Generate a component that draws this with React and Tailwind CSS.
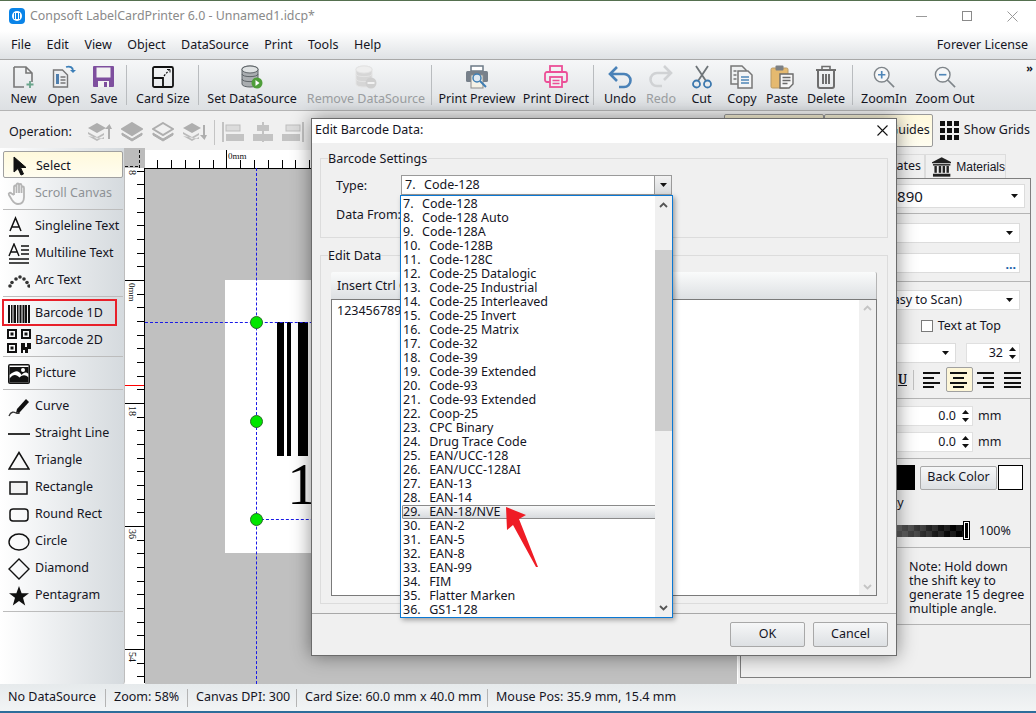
import React from "react";

const F = "font-['Noto_Sans','Open_Sans',sans-serif]";

const I = {
  New: () => (<svg width="22" height="24" viewBox="0 0 22 24" fill="none"><path d="M1 2h12l6 6v9M19 8h-6V2M1 2v20h10" stroke="#777" strokeWidth="1.6" /><path d="M17 16v7M13.5 19.500h7" stroke="#6aa58c" strokeWidth="1.8" /></svg>),
  Open: () => (<svg width="24" height="24" viewBox="0 0 24 24" fill="none"><path d="M1.500 5h9l5 5v12h-14z" fill="#eceef0" stroke="#777" strokeWidth="1.400" /><path d="M4 9h3v10H4z" fill="#4f7fae" /><path d="M8.500 12h5M8.500 15h5M8.500 18h5" stroke="#777" strokeWidth="1.300" /><path d="M14 2c4-1 7 0 7 4" stroke="#3c7fb8" strokeWidth="1.800" /><path d="M18 5l3 3 3-3" fill="#3c7fb8" /></svg>),
  Save: () => (<svg width="22" height="22" viewBox="0 0 22 22"><rect width="21" height="21" rx="1" fill="#7e4f9e" /><rect x="3.500" y="1.500" width="14" height="10" fill="#f2f2f2" /><rect x="5" y="15" width="11" height="6" fill="#f2f2f2" /><rect x="11" y="16" width="3" height="5" fill="#7e4f9e" /></svg>),
  Card: () => (<svg width="22" height="22" viewBox="0 0 22 22" fill="none" stroke="#111"><rect x="1" y="1" width="20" height="20" rx="1.500" strokeWidth="1.800" /><path d="M1 12h10v9" strokeWidth="1.800" /><path d="M12 10l5-6" strokeWidth="1.200" strokeDasharray="2 1.500" /><path d="M15 3.500h3v3" strokeWidth="1" /></svg>),
  Db: ({ off }) => (<svg width="22" height="24" viewBox="0 0 22 24"><g fill={off ? "#d6d6d6" : "#a9adb0"} stroke={off ? "#e4e4e4" : "#5e6468"}><path d="M1 4c0-4 16-4 16 0v15c0 4-16 4-16 0z" /><path d="M1 9c0 3.500 16 3.500 16 0M1 14c0 3.500 16 3.500 16 0" fill="none" /><ellipse cx="9" cy="4.500" rx="8" ry="3.500" fill={off ? "#eeeeee" : "#dfe2e3"} /></g><circle cx="16" cy="18" r="5.500" fill={off ? "#cfcfcf" : "#4f9e3a"} />{off ? <rect x="12.500" y="17" width="7" height="2" fill="#f2f2f2" /> : <path d="M14.500 15l4 3-4 3z" fill="#fff" />}</svg>),
  Preview: () => (<svg width="24" height="24" viewBox="0 0 24 24" fill="none"><rect x="6" y="1" width="12" height="5" fill="#fff" stroke="#6c7a86" strokeWidth="1.500" /><rect x="1" y="6" width="22" height="11" rx="1.500" fill="#77808a" /><rect x="6" y="10" width="12" height="13" fill="#f4f1e6" stroke="#8a8a8a" /><circle cx="12" cy="13" r="4" fill="#dfe9f2" stroke="#3f7eb3" strokeWidth="1.500" /><path d="M15 16l6 6" stroke="#3f7eb3" strokeWidth="2" /></svg>),
  Direct: () => (<svg width="24" height="24" viewBox="0 0 24 24" fill="none" stroke="#ec4f97" strokeWidth="1.800"><rect x="6" y="1" width="12" height="6" /><rect x="1" y="7" width="22" height="10" rx="2" /><rect x="6" y="12" width="12" height="10" fill="#f0f1f3" /><path d="M8.500 15.500h7M8.500 18.500h7" strokeWidth="1.400" /></svg>),
  Undo: ({ off }) => (<svg width="24" height="24" viewBox="0 0 24 24" fill="none" stroke={off ? "#d0d2d4" : "#4a82b8"} strokeWidth="2.600"><path d={off ? "M21 8H8a6.500 6.500 0 0 0 0 13h5M15 1l7 7-7 7" : "M3 9h13a6.500 6.500 0 0 1 0 13h-5M9 2L2 9l7 7"} /></svg>),
  Cut: () => (<svg width="22" height="24" viewBox="0 0 22 24" fill="none"><path d="M5 1l10 15M17 1L7 16" stroke="#6e7478" strokeWidth="1.800" /><circle cx="5.500" cy="19" r="3.500" stroke="#3c78ae" strokeWidth="1.800" /><circle cx="16.500" cy="19" r="3.500" stroke="#3c78ae" strokeWidth="1.800" /></svg>),
  Copy: () => (<svg width="24" height="24" viewBox="0 0 24 24" fill="none"><path d="M1 1h11l4 4v14H1z" fill="#eef0f1" stroke="#777" strokeWidth="1.500" /><path d="M8 6h10l4 4v13H8z" fill="#f4f5f6" stroke="#777" strokeWidth="1.500" /><path d="M3.500 6h3M3.500 10h3M3.500 14h3" stroke="#777" strokeWidth="1.500" /><path d="M11 12h8M11 15h8M11 18h8" stroke="#4f86b8" strokeWidth="1.500" /></svg>),
  Paste: () => (<svg width="24" height="24" viewBox="0 0 24 24"><rect x="1" y="3" width="17" height="20" rx="1.500" fill="#e5b96f" stroke="#b99a66" /><rect x="5.500" y="0.500" width="8" height="5" rx="1" fill="#7c8084" /><path d="M10 9h13v10l-4 4h-9z" fill="#f6f6f6" stroke="#6a6a6a" strokeWidth="1.400" /><path d="M12.500 12.500h8M12.500 15.500h8M12.500 18.500h5" stroke="#6a6a6a" strokeWidth="1.300" /></svg>),
  Trash: () => (<svg width="22" height="24" viewBox="0 0 22 24" fill="none" stroke="#6e6e6e"><path d="M1 5h20" strokeWidth="2" /><path d="M7 5V1.500h8V5" strokeWidth="1.600" /><path d="M3 5v16c0 1 1 2 2 2h12c1 0 2-1 2-2V5" strokeWidth="2" /><path d="M8 9v10M11 9v10M14 9v10" strokeWidth="2" /></svg>),
  Zoom: ({ plus }) => (<svg width="22" height="22" viewBox="0 0 24 24" fill="none"><circle cx="9.500" cy="9.500" r="8" stroke="#7e8489" strokeWidth="1.500" fill="#f6f7f8" /><path d="M15 15l8 8" stroke="#7e8489" strokeWidth="1.800" /><path d={plus ? "M5.500 9.500h8M9.500 5.500v8" : "M5.500 9.500h8"} stroke="#4f86b8" strokeWidth="1.800" /></svg>),
  Stack1: ({ down }) => (<svg width="24" height="20" viewBox="0 0 24 20" fill="#aeaeae"><path d="M0 6l9-5 9 5-9 5z" /><path d="M0 10l9 5 7-4v2l-7 4-9-5zM0 14l9 5 7-4v2" opacity=".8" /><path d={down ? "M20 3v10h-3l4.500 5L24 13h-2V3z" : "M20 17V7h-3l4.500-5L24 7h-2v10z"} /></svg>),
  Stack2: ({ hollow }) => (<svg width="22" height="20" viewBox="0 0 22 20"><path d="M11 1l10 6-10 6L1 7z" fill={hollow ? "none" : "#aeaeae"} stroke="#aeaeae" strokeWidth="2" /><path d="M1 11l10 6 10-6v2l-10 6-10-6z" fill="#aeaeae" stroke="#aeaeae" /></svg>),
  AlignBar: ({ v }) => (<svg width="22" height="20" viewBox="0 0 22 20" fill="#c3c3c3">{v === 0 && <><rect width="2" height="20" /><rect x="4" y="3" width="14" height="6" fill="#dcdcdc" stroke="#bdbdbd" /><rect x="4" y="12" width="18" height="7" /></>}{v === 1 && <><rect x="10" width="2" height="20" /><rect x="5" y="3" width="12" height="6" /><rect x="1" y="12" width="20" height="7" /></>}{v === 2 && <><rect x="20" width="2" height="20" /><rect x="4" y="3" width="14" height="6" fill="#dcdcdc" stroke="#bdbdbd" /><rect y="12" width="18" height="7" /></>}</svg>),
  Grid: () => (<svg width="19" height="19" viewBox="0 0 19 19" fill="#111">{[0, 7, 14].flatMap((x) => [0, 7, 14].map((y) => <rect key={x + "-" + y} x={x} y={y} width="5" height="5" />))}</svg>),
  Bank: () => (<svg width="20" height="20" viewBox="0 0 20 20" fill="#222"><path d="M10 0l10 5v1H0V5z" /><rect x="1" y="7" width="18" height="1.500" /><rect x="2.500" y="9" width="2.500" height="7" /><rect x="7" y="9" width="2.500" height="7" /><rect x="11" y="9" width="2.500" height="7" /><rect x="15" y="9" width="2.500" height="7" /><rect x="1" y="17" width="18" height="3" /></svg>),
  Arrow: () => (<svg width="16" height="20" viewBox="0 0 16 20"><path d="M2 1v15l4-3.500 3 6.500 2.500-1-3-6.500H14z" fill="#111" stroke="#111" /></svg>),
  Hand: () => (<svg width="24" height="24" viewBox="0 0 24 24" fill="none" stroke="#b5b5b5" strokeWidth="1.800"><path d="M7 13V5c0-2 2.500-2 2.500 0v6M9.500 10V3c0-2 2.500-2 2.500 0v8M12 10V3.500c0-2 2.500-2 2.500 0V11M14.500 11V6c0-2 2.500-2 2.500 0v9c0 4-2 7-6 7-3 0-4-1-6-4l-3-5c-1-2 1-3 2.500-1.500L7 13" /></svg>),
  TextS: () => (<svg width="22" height="22" viewBox="0 0 22 22" fill="none" stroke="#111"><path d="M2 15L7.500 2 13 15M4 11h7" strokeWidth="1.500" /><path d="M1 20h20" strokeWidth="1.600" /></svg>),
  TextM: () => (<svg width="22" height="22" viewBox="0 0 22 22" fill="none" stroke="#111"><path d="M1 13L6 1l5 12M3 9h6" strokeWidth="1.400" /><path d="M13 3h8M13 7h8M13 11h8M1 16h20M1 20h20" strokeWidth="1.400" /></svg>),
  Arc: () => (<svg width="22" height="14" viewBox="0 0 22 14" fill="#333">{[[2, 12], [4, 8.500], [8, 5], [12, 3], [16, 5], [19, 8.500], [21, 12]].map(([x, y], i) => <circle key={i} cx={x} cy={y} r="1.800" />)}</svg>),
  Bar1: () => (<svg width="22" height="18" viewBox="0 0 22 18" fill="#111">{[[0, 2], [3, 1.500], [5.500, 2.500], [9, 1.500], [11.500, 2], [14.500, 1.500], [16.500, 2.500], [20, 2]].map(([x, w], i) => <rect key={i} x={x} width={w} height="18" />)}</svg>),
  Bar2: () => (<svg width="24" height="24" viewBox="0 0 24 24" fill="#111"><path fillRule="evenodd" d="M0 0h10v10H0zM2 2v6h6V2zM14 0h10v10H14zm2 2v6h6V2zM0 14h10v10H0zm2 2v6h6v-6z" /><rect x="3.500" y="3.500" width="3" height="3" /><rect x="17.500" y="3.500" width="3" height="3" /><rect x="3.500" y="17.500" width="3" height="3" /><path d="M14 14h4v4h2v-4h4v6h-3v4h-3v-3h-2v3h-2z" /></svg>),
  Pic: () => (<svg width="22" height="20" viewBox="0 0 22 20"><rect width="22" height="20" rx="2" fill="#111" /><rect x="1.500" y="1.500" width="19" height="17" fill="#fff" /><path d="M1.500 3h19v7c-3-3-5-1-7 1-3-5-6-5-12 0z" fill="#111" /><path d="M1.500 18.500v-4c4-5 7-4 10-1 3-3 6-3 9 0v5z" fill="#111" /><circle cx="15" cy="6" r="2" fill="#fff" /></svg>),
  Curve: () => (<svg width="22" height="20" viewBox="0 0 22 20" fill="none"><path d="M1 19c2-5 5-4 7-3s5 0 2-1" stroke="#333" strokeWidth="1.300" /><path d="M9 12L18 2l3 3-9 10-4 1z" fill="#111" /></svg>),
  Line: () => (<svg width="22" height="4" viewBox="0 0 22 4"><rect y="1" width="22" height="2" fill="#333" /></svg>),
  Tri: () => (<svg width="22" height="19" viewBox="0 0 22 19" fill="none" stroke="#111" strokeWidth="1.500"><path d="M11 1.500L1 18h20z" /></svg>),
  Rect: () => (<svg width="20" height="14" viewBox="0 0 20 14" fill="none" stroke="#111" strokeWidth="1.500"><rect x="1" y="1" width="17" height="12" fill="#f2f2f2" /></svg>),
  Round: () => (<svg width="20" height="14" viewBox="0 0 20 14" fill="none" stroke="#111" strokeWidth="1.500"><rect x="1" y="1" width="18" height="12" rx="3" /></svg>),
  Circle: () => (<svg width="22" height="18" viewBox="0 0 22 18" fill="none" stroke="#111" strokeWidth="1.400"><ellipse cx="11" cy="9" rx="10" ry="8" /></svg>),
  Diamond: () => (<svg width="22" height="22" viewBox="0 0 22 22" fill="none" stroke="#111" strokeWidth="1.400"><path d="M11 1l10 10-10 10L1 11z" /></svg>),
  Star: () => (<svg width="22" height="20" viewBox="0 0 22 20" fill="#111"><path d="M11 0l2.600 7.200H21l-6 4.600 2.200 7.700L11 15l-6.200 4.500L7 11.800l-6-4.600h7.400z" /></svg>),
};

const Drop = () => (<svg width="7" height="4" viewBox="0 0 7 4" className="shrink-0"><path d="M0 0h7L3.500 4z" fill="#111" /></svg>);
const Spin = () => (
  <span className="flex flex-col gap-[4px] items-center ml-[6px] mr-[3px]">
    <svg width="7" height="4" viewBox="0 0 7 4"><path d="M0 4h7L3.500 0z" fill="#111" /></svg>
    <svg width="7" height="4" viewBox="0 0 7 4"><path d="M0 0h7L3.500 4z" fill="#111" /></svg>
  </span>
);

const tools = [
  [39, "New", <I.New />], [41, "Open", <I.Open />], [40, "Save", <I.Save />], "s",
  [66, "Card Size", <I.Card />, 1], "s",
  [96, "Set DataSource", <I.Db />, 3], [126, "Remove DataSource", <I.Db off />, 3, true], "s",
  [84, "Print Preview", <I.Preview />, 1], [70, "Print Direct", <I.Direct />, 2], "s",
  [40, "Undo", <I.Undo />, 4], [40, "Redo", <I.Undo off />, 1, true], [41, "Cut", <I.Cut />], [40, "Copy", <I.Copy />], [40, "Paste", <I.Paste />], [48, "Delete", <I.Trash />], "s",
  [56, "ZoomIn", <I.Zoom plus />, 1], [66, "Zoom Out", <I.Zoom />],
];

const groups = [
  [["Select", <I.Arrow />, "sel"], ["Scroll Canvas", <I.Hand />, "off"]],
  [["Singleline Text", <I.TextS />], ["Multiline Text", <I.TextM />], ["Arc Text", <I.Arc />]],
  [["Barcode 1D", <I.Bar1 />], ["Barcode 2D", <I.Bar2 />]],
  [["Picture", <I.Pic />]],
  [["Curve", <I.Curve />], ["Straight Line", <I.Line />], ["Triangle", <I.Tri />], ["Rectangle", <I.Rect />], ["Round Rect", <I.Round />], ["Circle", <I.Circle />], ["Diamond", <I.Diamond />], ["Pentagram", <I.Star />]],
];

const codes = ["7.  Code-128", "8.  Code-128 Auto", "9.  Code-128A", "10.  Code-128B", "11.  Code-128C", "12.  Code-25 Datalogic", "13.  Code-25 Industrial", "14.  Code-25 Interleaved", "15.  Code-25 Invert", "16.  Code-25 Matrix", "17.  Code-32", "18.  Code-39", "19.  Code-39 Extended", "20.  Code-93", "21.  Code-93 Extended", "22.  Coop-25", "23.  CPC Binary", "24.  Drug Trace Code", "25.  EAN/UCC-128", "26.  EAN/UCC-128AI", "27.  EAN-13", "28.  EAN-14", "29.  EAN-18/NVE", "30.  EAN-2", "31.  EAN-5", "32.  EAN-8", "33.  EAN-99", "34.  FIM", "35.  Flatter Marken", "36.  GS1-128"];

const Code = ({ c }) => {
  const [n, rest] = c.split("  ");
  return <>{n + "  "}<span className="ml-[2px]">{rest}</span></>;
};

function TopRuler() {
  const t = [];
  for (let i = 0; i < 45; i++) t.push(i);
  return (
    <svg width="592" height="18" className="block">
      <rect width="592" height="18" fill="#fff" />
      {t.map((i) => <rect key={i} x={Math.round(12.300 + i * 13.800)} y={10} width="1" height={8} fill="#000" />)}
      <rect x="81" y="0" width="1" height="18" fill="#000" />
      <text x="83" y="9" fontSize="9" fontFamily="Liberation Serif" fill="#111">0mm</text>
    </svg>
  );
}

function LeftRuler() {
  const t = [];
  for (let i = -8; i < 30; i++) t.push(i);
  return (
    <svg width="20" height="515" className="block absolute left-0 top-[20px]">
      <rect width="20" height="515" fill="#fff" />
      {t.map((i) => { const y = 112 + i * 13.670; return <rect key={i} x={i % 9 === 0 ? 0 : 12} y={Math.round(y)} width={i % 9 === 0 ? 20 : 8} height="1" fill="#000" />; })}
      <rect x="0" y="217" width="20" height="1" fill="#f00" />
      <rect x="19" y="0" width="1" height="515" fill="#000" />
      <text transform="translate(4 2) rotate(90)" fontSize="10" fontFamily="Liberation Serif" fill="#111">8</text>
      <text transform="translate(4 115) rotate(90)" fontSize="9" fontFamily="Liberation Serif" fill="#111">0mm</text>
      <text transform="translate(4 238) rotate(90)" fontSize="10" fontFamily="Liberation Serif" fill="#111">18</text>
      <text transform="translate(4 361) rotate(90)" fontSize="10" fontFamily="Liberation Serif" fill="#111">36</text>
      <text transform="translate(4 484) rotate(90)" fontSize="10" fontFamily="Liberation Serif" fill="#111">54</text>
    </svg>
  );
}

const Field = ({ className = "", children }) => (
  <div className={"bg-white border border-[#dcdcdc] h-[20px] flex items-center justify-end " + className}>{children}</div>
);

export default function App() {
  return (
    <div className={F + " relative w-[1036px] h-[713px] overflow-hidden bg-[#f0f0f0] text-[12.5px] text-[#15151f] flex flex-col border-t border-[#55704f] border-b-2 border-b-[#2d6d9a]"}>
      {/* title */}
      <div className="h-[30px] bg-white flex items-center shrink-0 pl-[9px]">
        <div className="w-[16px] h-[16px] rounded-[4px] bg-[#0a84e8] flex items-center justify-center">
          <div className="w-[10px] h-[10px] rounded-full bg-white flex items-center justify-center gap-[1px]">
            <div className="w-[1px] h-[6px] bg-[#0a84e8]" /><div className="w-[2px] h-[6px] bg-[#0a84e8]" /><div className="w-[1px] h-[6px] bg-[#0a84e8]" />
          </div>
        </div>
        <span className="ml-[5px] text-[#8a8a8a] text-[12.4px]">Conpsoft LabelCardPrinter 6.0 - Unnamed1.idcp*</span>
        <div className="ml-auto flex items-center mr-[18px] gap-[35px]">
          <div className="w-[11px] h-[1px] bg-[#9a9a9a]" />
          <div className="w-[10px] h-[10px] border border-[#8a8a8a]" />
          <svg width="11" height="11" viewBox="0 0 11 11"><path d="M0.500 0.500l10 10M10.500 0.500l-10 10" stroke="#999" /></svg>
        </div>
      </div>
      {/* menu */}
      <div className="h-[29px] shrink-0 bg-gradient-to-b from-white to-[#dfe2e5] border-b border-[#a8a8a8] flex items-center pt-[1px] pl-[11px] pr-[8px] gap-[15.500px]">
        {["File", "Edit", "View", "Object", "DataSource", "Print", "Tools", "Help"].map((m) => <span key={m}>{m}</span>)}
        <span className="ml-auto">Forever License</span>
      </div>
      {/* toolbar */}
      <div className="h-[51px] shrink-0 relative bg-gradient-to-b from-[#f6f7f8] to-[#dde0e3] border-b border-[#b4b4b4] flex items-stretch pl-[4px]">
        {tools.map((t, i) => t === "s" ? (
          <div key={i} className="w-[1px] mx-[2px] my-[5px] bg-[#b9bcbf] shrink-0" />
        ) : (
          <div key={i} style={{ width: t[0], marginLeft: t[3] || 0 }} className={"flex flex-col items-center shrink-0 " + (t[4] ? "text-[#9b9ea1]" : "")}>
            <div className="h-[24px] mt-[5px] flex items-center">{t[2]}</div>
            <span className="mt-[2px] leading-[16px] whitespace-nowrap">{t[1]}</span>
          </div>
        ))}
        <span className="absolute right-[3px] top-[2px] text-[11px] font-bold leading-[12px]">»</span>
      </div>
      {/* operation bar */}
      <div className="h-[37px] shrink-0 bg-[#f0f0f0] flex items-center pl-[9px] pt-[1px]">
        <div className="flex items-center mt-[4px]">
          <span>Operation:</span>
          <div className="ml-[16px] flex items-center gap-[9px]"><I.Stack1 /><I.Stack2 /><I.Stack2 hollow /><I.Stack1 down /></div>
          <div className="w-[1px] h-[25px] bg-[#c4c4c4] ml-[7px] mr-[7px]" />
          <div className="flex items-center gap-[8px]"><I.AlignBar v={0} /><I.AlignBar v={1} /><I.AlignBar v={2} /></div>
        </div>
        <div className="ml-auto mr-[6px] flex items-center h-full">
          <div className="w-[100px] h-[33px] bg-[#fdf6d8] border border-[#9a9a9a] rounded-[2px]" />
          <div className="w-[109px] h-[33px] bg-gradient-to-b from-[#fff9dc] to-[#fffdf0] border border-[#9a9a9a] rounded-[2px] flex items-center justify-end pr-[2px]">Show Guides</div>
          <div className="ml-[7px] flex items-center gap-[5px]"><I.Grid /><span>Show Grids</span></div>
        </div>
      </div>
      {/* middle */}
      <div className="flex-1 flex min-h-0">
        <div className="w-[125px] shrink-0 bg-gradient-to-r from-white to-[#d5dade] border-r border-[#bdbdbd] rounded-br-[3px] pl-[3px] pr-[1px] pt-[3px]">
          {groups.map((g, gi) => (
            <div key={gi} className="border-b border-[#bcbcbc] pb-[2px] mb-[3px]">
              {g.map(([label, icon, st]) => (
                <div key={label} className={"h-[27px] flex items-center " + (st === "sel" ? "bg-gradient-to-b from-[#fff9dc] to-[#fffdf0] border border-[#a0a0a0] rounded-[2px] pt-[3px] mb-[2px]" : "") + (st === "off" ? " text-[#8e9296]" : "")}>
                  <div className="w-[32px] shrink-0 flex justify-center">{icon}</div>
                  <span className="whitespace-nowrap">{label}</span>
                </div>
              ))}
            </div>
          ))}
        </div>
        {/* canvas */}
        <div className="flex-1 relative bg-[#f0f0f0] overflow-hidden">
          <div className="absolute left-0 top-[20px] bottom-0 w-[20px] bg-white" />
          <div className="absolute left-[20px] top-[2px]"><TopRuler /></div>
          <LeftRuler />
          <svg className="absolute left-0 top-0" width="20" height="20"><rect width="20" height="20" fill="#bcbcbc" /><path d="M14.500 2v18M0 18.500h14" stroke="#111" strokeDasharray="3 2" /></svg>
          <div className="absolute left-[20px] top-[20px] right-0 bottom-0 bg-[#c0c0c0] border-t border-black" />
          <div className="absolute left-[100px] top-[132px] w-[500px] h-[273px] bg-white" />
          <div className="absolute left-[152px] top-[174px] w-[7px] h-[134px] bg-black" />
          <div className="absolute left-[162px] top-[174px] w-[4px] h-[134px] bg-black" />
          <div className="absolute left-[173px] top-[174px] w-[10px] h-[134px] bg-black" />
          <div className="absolute left-[162px] top-[302px] font-['Liberation_Serif',serif] text-[60px] leading-[68px] text-black">1</div>
          <div className="absolute left-[131px] top-[20px] bottom-0 border-l border-dashed border-[#1a1ae6]" />
          <div className="absolute left-[20px] right-0 top-[174px] border-t border-dashed border-[#1a1ae6]" />
          <div className="absolute left-[131px] right-0 top-[371px] border-t border-dashed border-[#1a1ae6]" />
          {[174, 273, 371].map((y) => <div key={y} style={{ top: y - 6 }} className="absolute left-[125px] w-[13px] h-[13px] rounded-full bg-[#00e600] border border-[#2a6a2a]" />)}
        </div>
        {/* right panel */}
        <div className="w-[299px] shrink-0 bg-[#f0f0f0] pl-[2px] pr-[5px] flex flex-col border-l border-white">
          <div className="h-[30px] flex items-end pl-[85px]">
            <div className="w-[100px] h-[24px] bg-[#f0f0f0] border border-[#dcdcdc] border-b-0 flex items-center justify-end pr-[3px]">Templates</div>
            <div className="w-[81px] h-[24px] bg-[#f0f0f0] border border-[#dcdcdc] border-b-0 flex items-center gap-[5px] pl-[6px]"><I.Bank /><span className="font-['Liberation_Sans',sans-serif] text-[12px]">Materials</span></div>
          </div>
          <div className="flex-1 border border-[#7f7f7f] mb-[6px] min-h-0">
            <div className="h-[35px] border-b border-[#b4b4b4] pt-[5px] pl-[4px] pr-[5px]">
              <Field className="h-[24px] pr-[6px] !justify-between pl-[91px]"><span className="text-[15px]">1234567890</span><Drop /></Field>
            </div>
            <div className="h-[68px] border-b border-[#b4b4b4] pt-[9px] pl-[4px] pr-[10px] flex flex-col gap-[10px]">
              <Field className="pr-[6px]"><Drop /></Field>
              <Field className="pr-[3px] items-end"><span className="text-[#1a5fa8] font-bold leading-[14px]">...</span></Field>
            </div>
            <div className="h-[117px] border-b border-[#b4b4b4] pt-[8px] pl-[4px] pr-[10px]">
              <Field className="pr-[6px] !justify-between pl-[77px]"><span>Code-128 (Easy to Scan)</span><Drop /></Field>
              <div className="h-[24px] flex items-center justify-end mt-[4px] pr-[19px] gap-[5px]"><div className="w-[12px] h-[12px] border border-[#7a7a7a] bg-white" /><span>Text at Top</span></div>
              <div className="flex mt-[5px] justify-end">
                <Field className="w-[100px] pr-[6px]"><Drop /></Field>
                <Field className="w-[54px] ml-[10px] !border-[#e0e0e0]"><span>32</span><Spin /></Field>
              </div>
              <div className="flex items-center justify-end mt-[4px] -mr-[7px]">
                <span className="underline font-serif font-bold mr-[6px] text-[13px]">U</span>
                <div className="w-[1px] h-[20px] bg-[#c0c0c0] mr-[5px]" />
                {[0, 1, 2, 3].map((v) => (
                  <div key={v} className={"w-[27px] h-[25px] flex items-center justify-center " + (v === 1 ? "bg-[#fdf6d8] border border-[#a0a0a0] rounded-[2px]" : "")}>
                    <svg width="19" height="16" viewBox="0 0 19 16" fill="#111">
                      {[0, 5, 10, 14].map((y, i) => { const w = v === 3 ? 17 : (i % 2 === 0 ? 17 : 11); const x = v === 0 || v === 3 ? 0 : v === 1 ? (17 - w) / 2 : 17 - w; return <rect key={y} x={x} y={y} width={w} height="2" />; })}
                    </svg>
                  </div>
                ))}
              </div>
            </div>
            <div className="h-[60px] border-b border-[#b4b4b4] pt-[7px] flex flex-col gap-[6px]">
              {[0, 1].map((i) => (
                <div key={i} className="flex items-center pl-[4px]">
                  <Field className="w-[228px] !border-[#e0e0e0]"><span>0.0</span><Spin /></Field>
                  <span className="ml-[5px]">mm</span>
                </div>
              ))}
            </div>
            <div className="h-[89px] border-b border-[#b4b4b4] pl-[4px] pt-[6px]">
              <div className="flex items-center justify-end pr-[7px]">
                <div className="w-[60px] h-[25px] bg-black" />
                <div className="w-[77px] h-[24px] ml-[5px] bg-gradient-to-b from-[#f6f7f8] to-[#dde0e3] border border-[#a8a8a8] rounded-[2px] flex items-center justify-center">Back Color</div>
                <div className="w-[25px] h-[25px] ml-[1px] bg-white border border-black" />
              </div>
              <div className="h-[26px] pl-[114px] flex items-center">Opacity</div>
              <div className="flex items-center mt-[6px]">
                <div className="ml-[97px] w-[126px] h-[12px] bg-gradient-to-r from-[#c8c8c8] to-black relative">
                  <div className="absolute inset-0 bg-[conic-gradient(rgba(255,255,255,0.09)_25%,transparent_0_50%,rgba(255,255,255,0.09)_0_75%,transparent_0)] bg-[length:12px_12px]" />
                  <div className="absolute right-[-1px] top-[-3px] w-[5px] h-[17px] bg-black border border-white outline outline-1 outline-black" />
                </div>
                <span className="ml-[11px]">100%</span>
              </div>
            </div>
            <div className="h-[77px] border-b border-[#b4b4b4] pl-[168px] pt-[12px] leading-[14px] pr-[4px]">Note: Hold down the shift key to generate 15 degree multiple angle.</div>
          </div>
        </div>
      </div>
      {/* status */}
      <div className="h-[27px] shrink-0 bg-gradient-to-b from-[#e6eaec] to-[#f2f4f5] flex items-center pl-[8px] relative">
        {[["No DataSource", 98], ["Zoom: 58%", 82], ["Canvas DPI: 300", 109], ["Card Size: 60.0 mm x 40.0 mm", 191], ["Mouse Pos: 35.9 mm, 15.4 mm", 0]].map(([s, w], i) => (
          <div key={i} style={w ? { width: w } : undefined} className={"h-[18px] flex items-center whitespace-nowrap " + (i ? "pl-[8px] " : "") + (w ? "border-r border-[#b4b4b4]" : "")}>{s}</div>
        ))}
      </div>

      {/* red box */}
      <div className="absolute left-[2px] top-[298px] w-[115px] h-[27px] border-2 border-[#e8202a]" />

      {/* dialog */}
      <div className="absolute left-[311px] top-[117px] w-[586px] h-[538px] bg-[#f0f0f0] border border-[#6b6b6b] shadow-[0_0_18px_rgba(0,0,0,0.45)] flex flex-col">
        <div className="h-[24px] bg-white flex items-center justify-between pl-[3px] pr-[8px] pb-[2px] shrink-0">
          <span>Edit Barcode Data:</span>
          <svg width="11" height="11" viewBox="0 0 11 11"><path d="M0.500 0.500l10 10M10.500 0.500l-10 10" stroke="#111" strokeWidth="1.100" /></svg>
        </div>
        <div className="flex-1 px-[8px] pt-[15px] flex flex-col min-h-0">
          <div className="relative h-[80px] border border-[#dcdcdc] shrink-0">
            <span className="absolute left-[7px] -top-[8px] bg-[#f0f0f0] leading-[16px]">Barcode Settings</span>
            <div className="flex items-center pl-[15px] pt-[17px] h-[36px]">
              <span className="w-[65px] pt-[1px]">Type:</span>
              <div className="w-[271px] h-[20px] -mt-[1px] bg-white border border-[#9a9a9a] flex items-center justify-between">
                <span className="pl-[3px] whitespace-pre pt-[1px]"><Code c="7.  Code-128" /></span>
                <div className="w-[17px] h-[18px] bg-gradient-to-b from-[#f2f2f2] to-[#d8dadc] border-l border-[#9a9a9a] flex items-center justify-center"><Drop /></div>
              </div>
            </div>
            <div className="pl-[15px] pt-[11px]">Data From:</div>
          </div>
          <div className="relative flex-1 border border-[#dcdcdc] mt-[17px] mb-[9px] px-[10px] pt-[16px] pb-[7px] flex flex-col min-h-0">
            <span className="absolute left-[7px] -top-[8px] bg-[#f0f0f0] leading-[16px]">Edit Data</span>
            <div className="h-[27px] shrink-0 bg-gradient-to-b from-[#fafbfb] to-[#dde0e3] rounded-t-[2px] border-r border-[#b4b4b4] flex items-center pl-[6px] pt-[1px]">Insert Ctrl Char</div>
            <div className="flex-1 bg-white border border-[#7a7a7a] flex justify-between min-h-0">
              <span className="pl-[5px] pt-[2px]">1234567890</span>
              <div className="w-[17px] bg-[#f0f0f0] flex flex-col justify-between items-center py-[5px]">
                <svg width="9" height="6" viewBox="0 0 9 6" fill="none"><path d="M1 5l3.500-3.500L8 5" stroke="#c4c4c4" strokeWidth="1.800" /></svg>
                <svg width="9" height="6" viewBox="0 0 9 6" fill="none"><path d="M1 1l3.500 3.500L8 1" stroke="#c4c4c4" strokeWidth="1.800" /></svg>
              </div>
            </div>
          </div>
        </div>
        <div className="h-[42px] shrink-0 border-t border-[#a8a8a8] flex items-center justify-end gap-[8px] pr-[8px]">
          {["OK", "Cancel"].map((b) => <div key={b} className="w-[75px] h-[25px] bg-gradient-to-b from-[#f6f7f8] to-[#dde0e3] border border-[#a8a8a8] rounded-[2px] flex items-center justify-center">{b}</div>)}
        </div>
      </div>

      {/* dropdown */}
      <div className="absolute left-[400px] top-[194px] w-[273px] h-[423px] bg-white border border-[#0a78d4] shadow-[2px_2px_5px_rgba(0,0,0,0.35)] flex">
        <div className="flex-1 pl-[2px] pt-[1px] min-w-0">
          {codes.map((c, i) => (
            <div key={c} className={"h-[14px] whitespace-pre " + (i === 22 ? "leading-[12px] bg-gradient-to-b from-[#f8f9f9] to-[#d8dbde] border border-[#8a8a8a] rounded-[1px] -ml-[1px] -mr-[1px]" : "leading-[14px]")}><Code c={c} /></div>
          ))}
        </div>
        <div className="w-[17px] bg-[#f0f0f0] flex flex-col items-center relative">
          <svg className="mt-[6px]" width="9" height="6" viewBox="0 0 9 6" fill="none"><path d="M1 5l3.500-3.500L8 5" stroke="#555" strokeWidth="1.800" /></svg>
          <div className="w-full h-[181px] bg-[#cdcdcd] mt-[42px]" />
          <svg className="mt-auto mb-[6px]" width="9" height="6" viewBox="0 0 9 6" fill="none"><path d="M1 1l3.500 3.500L8 1" stroke="#555" strokeWidth="1.800" /></svg>
        </div>
      </div>

      {/* red arrow annotation */}
      <svg className="absolute left-[500px] top-[503px]" width="44" height="66" viewBox="0 0 44 66"><path d="M6 3l20 8-7 4 19 48-2 0-23-42-6 5z" fill="#ef1c25" /></svg>
    </div>
  );
}
